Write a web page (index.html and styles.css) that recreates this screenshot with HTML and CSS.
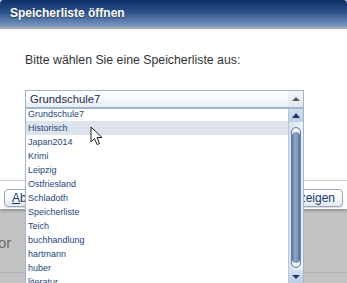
FILE: index.html
```html
<!DOCTYPE html>
<html>
<head>
  <title>Speicherliste öffnen</title>
  <meta charset="UTF-8">
  <link rel="stylesheet" href="styles.css">
</head>
<body>
  <div class="dialog">
    <div class="dialog-header">Speicherliste öffnen</div>

    <div class="dialog-body">
      <p class="prompt">Bitte wählen Sie eine Speicherliste aus:</p>

      <div class="combo">
        <div class="combo-field">
          <span class="combo-value">Grundschule7</span>
          <span class="combo-button"><span class="tri-up small"></span></span>
        </div>

        <!-- open dropdown, lies over the dialog footer -->
        <div class="combo-list">
          <ul class="combo-items">
            <li>Grundschule7</li>
            <li class="hover">Historisch</li>
            <li>Japan2014</li>
            <li>Krimi</li>
            <li>Leipzig</li>
            <li>Ostfriesland</li>
            <li>Schladoth</li>
            <li>Speicherliste</li>
            <li>Teich</li>
            <li>buchhandlung</li>
            <li>hartmann</li>
            <li>huber</li>
            <li>literatur</li>
          </ul>
          <div class="scrollbar">
            <div class="scroll-btn"><span class="tri-up"></span></div>
            <div class="scroll-track"><div class="scroll-thumb"></div></div>
            <div class="scroll-btn"><span class="tri-down"></span></div>
          </div>
        </div>

        <svg class="cursor" width="14" height="21" viewBox="0 0 14 21">
          <path d="M1 1 L1 16 L4.5 12.5 L7 18.5 L9.5 17.5 L7 11.5 L12 11.5 Z" fill="#fff" stroke="#222" stroke-width="1" stroke-linejoin="round"/>
        </svg>
      </div>
    </div>

    <div class="dialog-footer">
      <button class="btn"><u>A</u>bbrechen</button>
      <button class="btn">Anzeigen</button>
    </div>
  </div>

  <div class="page">
    <div class="page-text">or</div>
    <div class="page-rule"></div>
  </div>
</body>
</html>
```

FILE: styles.css
```css
body {
  margin: 0;
  width: 347px;
  height: 283px;
  overflow: hidden;
  background-color: #c3c3c3;
  font-family: 'Liberation Sans', Arial, sans-serif;
}

.dialog {
  background: white;
  border-radius: 4px 4px 0 0;
  box-shadow: 0 2px 3px rgba(0,0,0,0.25);
  position: relative;
  z-index: 1;
}

.dialog-header {
  height: 29px;
  box-sizing: border-box;
  padding: 6px 0 0 10px;
  line-height: 15px;
  font-size: 12px;
  font-weight: bold;
  color: white;
  text-shadow: 0 1px 1px rgba(0,0,0,0.4);
  background: linear-gradient(to bottom, #0a2f66 0%, #2d5188 45%, #7d9cc5 100%);
  border-radius: 4px 4px 0 0;
  border-bottom: 2px solid #a9abae;
}

.dialog-body {
  padding: 24px 0 0 25px;
}

.prompt {
  margin: 0;
  font-size: 12.3px;
  line-height: 15px;
  color: #333;
}

.combo {
  position: relative;
  width: 279px;
  margin-top: 22px;
}

.combo-field {
  display: flex;
  height: 18px;
  box-sizing: border-box;
  border: 1px solid #a3b5cc;
  background: linear-gradient(to bottom, #ffffff 0%, #f6f9fc 50%, #e6edf6 100%);
}

.combo-value {
  flex: 1;
  padding-left: 4px;
  font-size: 11.3px;
  line-height: 16px;
  color: #1e2c48;
}

.combo-button {
  width: 15px;
  display: flex;
  align-items: center;
  justify-content: center;
  background: linear-gradient(to bottom, #f4f6f8, #e3e7ec);
  border-left: 1px solid #f8fafc;
}

.tri-up {
  width: 0;
  height: 0;
  border-left: 4px solid transparent;
  border-right: 4px solid transparent;
  border-bottom: 5px solid #1d3b6e;
}

.tri-up.small {
  border-left-width: 4px;
  border-right-width: 4px;
  border-bottom: 4px solid #55595f;
}

.tri-down {
  width: 0;
  height: 0;
  border-left: 4px solid transparent;
  border-right: 4px solid transparent;
  border-top: 4px solid #1d3b6e;
}

.combo-list {
  position: absolute;
  left: 0;
  right: 0;
  top: 100%;
  height: 176px;
  box-sizing: border-box;
  display: flex;
  background: white;
  border: 1px solid #a3b5cc;
  overflow: hidden;
}

.combo-items {
  flex: 1;
  list-style: none;
  margin: -2px 0 0 0;
  padding: 0;
}

.combo-items li {
  height: 14px;
  line-height: 14px;
  padding-left: 2px;
  font-size: 9px;
  color: #26457a;
  white-space: nowrap;
}

.combo-items li.hover {
  background-color: #dde4ee;
}

.scrollbar {
  width: 14px;
  display: flex;
  flex-direction: column;
  border-left: 1px solid #b7c6d8;
  background-color: #e2e9f1;
}

.scroll-btn {
  height: 13px;
  display: flex;
  align-items: center;
  justify-content: center;
  background: linear-gradient(to bottom, #d3e0ef, #bccfe6);
}

.scroll-track {
  flex: 1;
  padding: 5px 2px 2px 2px;
  display: flex;
  background: linear-gradient(to right, #d6dfea, #eef2f7);
}

.scroll-thumb {
  flex: 1;
  border-radius: 6px;
  border: 1px solid #6482a8;
  background: linear-gradient(to right, #56769e 0%, #8ea8c8 35%, #7893b7 70%, #4f6e96 100%);
  box-shadow: inset 0 4px 0 #f3f6fa, inset 0 -4px 0 #f3f6fa;
}

.cursor {
  position: absolute;
  left: 65px;
  top: 36px;
}

.dialog-footer {
  display: flex;
  justify-content: space-between;
  margin-top: 72px;
  padding: 8px 4px 2px 4px;
  border-top: 1px solid #cfcfcf;
}

.btn {
  height: 18px;
  padding: 0 7px;
  border: 1px solid #9aa8b8;
  border-radius: 4px;
  background: linear-gradient(to bottom, #ffffff 0%, #f3f6f9 60%, #e2e8ef 100%);
  font-family: 'Liberation Sans', Arial, sans-serif;
  font-size: 12px;
  line-height: 16px;
  color: #22386a;
  box-shadow: 0 1px 1px rgba(0,0,0,0.15);
}

.page {
  padding-top: 25px;
}

.page-text {
  margin-left: -2px;
  font-size: 15px;
  line-height: 18px;
  color: #6e6e6e;
}

.page-rule {
  margin-top: 20px;
  border-top: 1px solid #b2b2b2;
}
```
